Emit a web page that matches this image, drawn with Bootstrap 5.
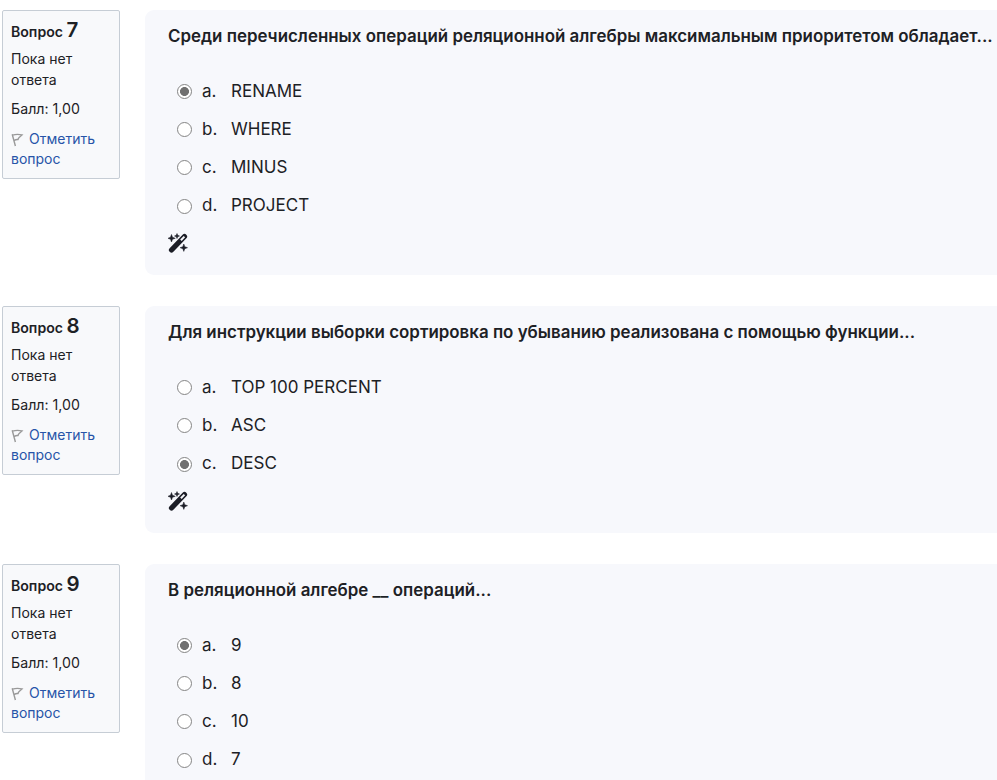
<!DOCTYPE html>
<html lang="ru">
<head>
<meta charset="utf-8">
<meta name="viewport" content="width=device-width, initial-scale=1">
<title>Тест</title>
<link href="https://cdn.jsdelivr.net/npm/bootstrap@5.3.0/dist/css/bootstrap.min.css" rel="stylesheet">
<style>
body { font-family: Inter, sans-serif; color: #1d2125; background: #fff; }
.quiz { padding: 10px 0 0 2px; height: 780px; overflow: hidden; }
.question { gap: 25px; margin-bottom: 31px; }
.question:last-child { margin-bottom: 0; }
.info { width: 118px; height: 169px; padding: 7px 8px; background: #f8f9fb; border: 1px solid #c6cdd5; border-radius: 2px; font-size: 14px; line-height: 20.4px; }
.info h3 { font-size: 14.1px; line-height: 24px; font-weight: 600; margin: 0 0 5.2px; white-space: nowrap; }
.info h3 span { font-size: 20.5px; }
.info .state { margin-bottom: 9px; }
.info .grade { margin-bottom: 9.4px; font-size: 14.2px; }
.info a { color: #2754a8; }
.flag { width: 14px; height: 14px; vertical-align: -3px; margin-right: 4px; }
.formulation { background: #f7f8fc; border-radius: 9px 0 0 9px; padding: 13px 0 22.5px 23px; min-width: 0; }
.qtext { font-size: 16.91px; line-height: 26px; font-weight: 600; white-space: nowrap; margin-bottom: 23.4px; }
.option { height: 38.2px; padding-left: 9px; font-size: 17px; }
.option input { appearance: none; width: 15px; height: 15px; border: 1.5px solid #858585; border-radius: 50%; background: #fff; margin: 0 10px 0 0; flex: none; }
.option input:checked { background: radial-gradient(circle, #707070 0 4.1px, #fff 4.8px); }
.option .num { width: 29px; }
.wand { width: 20px; height: 20px; margin-top: 7.5px; }
</style>
<script src="https://cdn.jsdelivr.net/npm/bootstrap@5.3.0/dist/js/bootstrap.bundle.min.js"></script>
</head>
<body>
<svg class="d-none" xmlns="http://www.w3.org/2000/svg">
  <symbol id="flag" viewBox="0 0 14 14"><path d="M1.2 1.3 4.4 13M1.5 2.1Q6 .8 11 1.9L7.8 4.8 7 6.6Q5 6.4 3 7.6" fill="none" stroke="#999" stroke-width="1.4"/></symbol>
  <symbol id="wand" viewBox="0 0 20 20"><path d="M3.5 17 16.5 3.5" stroke="#1b1d26" stroke-width="5.2" stroke-linecap="round"/><path d="M12.9 7.2 16.4 3.6" stroke="#f7f8fc" stroke-width="2"/><path d="M3.5 1.5 4.5 4.3 7.3 5.3 4.5 6.3 3.5 9 2.5 6.3-.2 5.3 2.5 4.3ZM9 .5 9.7 2.3 11.5 3 9.7 3.7 9 5.5 8.3 3.7 6.5 3 8.3 2.3ZM15.8 11 16.8 13.7 19.5 14.7 16.8 15.7 15.8 18.4 14.8 15.7 12.1 14.7 14.8 13.7Z" fill="#1b1d26" stroke="#1b1d26" stroke-width=".5"/></symbol>
</svg>
<main class="quiz">
  <section class="question d-flex align-items-start">
    <aside class="info flex-shrink-0">
      <h3>Вопрос <span>7</span></h3>
      <div class="state">Пока нет ответа</div>
      <div class="grade">Балл: 1,00</div>
      <a href="#" class="text-decoration-none"><svg class="flag"><use href="#flag"/></svg>Отметить вопрос</a>
    </aside>
    <div class="formulation flex-grow-1">
      <div class="qtext"><span>Среди перечисленных операций реляционной алгебры максимальным приоритетом обладает...</span></div>
      <label class="option d-flex align-items-center"><input type="radio" name="q7" checked><span class="num">a.</span><span>RENAME</span></label>
      <label class="option d-flex align-items-center"><input type="radio" name="q7"><span class="num">b.</span><span>WHERE</span></label>
      <label class="option d-flex align-items-center"><input type="radio" name="q7"><span class="num">c.</span><span>MINUS</span></label>
      <label class="option d-flex align-items-center"><input type="radio" name="q7"><span class="num">d.</span><span>PROJECT</span></label>
      <svg class="wand d-block"><use href="#wand"/></svg>
    </div>
  </section>
  <section class="question d-flex align-items-start">
    <aside class="info flex-shrink-0">
      <h3>Вопрос <span>8</span></h3>
      <div class="state">Пока нет ответа</div>
      <div class="grade">Балл: 1,00</div>
      <a href="#" class="text-decoration-none"><svg class="flag"><use href="#flag"/></svg>Отметить вопрос</a>
    </aside>
    <div class="formulation flex-grow-1">
      <div class="qtext"><span>Для инструкции выборки сортировка по убыванию реализована с помощью функции...</span></div>
      <label class="option d-flex align-items-center"><input type="radio" name="q8"><span class="num">a.</span><span>TOP 100 PERCENT</span></label>
      <label class="option d-flex align-items-center"><input type="radio" name="q8"><span class="num">b.</span><span>ASC</span></label>
      <label class="option d-flex align-items-center"><input type="radio" name="q8" checked><span class="num">c.</span><span>DESC</span></label>
      <svg class="wand d-block"><use href="#wand"/></svg>
    </div>
  </section>
  <section class="question d-flex align-items-start">
    <aside class="info flex-shrink-0">
      <h3>Вопрос <span>9</span></h3>
      <div class="state">Пока нет ответа</div>
      <div class="grade">Балл: 1,00</div>
      <a href="#" class="text-decoration-none"><svg class="flag"><use href="#flag"/></svg>Отметить вопрос</a>
    </aside>
    <div class="formulation flex-grow-1">
      <div class="qtext"><span>В реляционной алгебре __ операций...</span></div>
      <label class="option d-flex align-items-center"><input type="radio" name="q9" checked><span class="num">a.</span><span>9</span></label>
      <label class="option d-flex align-items-center"><input type="radio" name="q9"><span class="num">b.</span><span>8</span></label>
      <label class="option d-flex align-items-center"><input type="radio" name="q9"><span class="num">c.</span><span>10</span></label>
      <label class="option d-flex align-items-center"><input type="radio" name="q9"><span class="num">d.</span><span>7</span></label>
    </div>
  </section>
</main>
</body>
</html>
